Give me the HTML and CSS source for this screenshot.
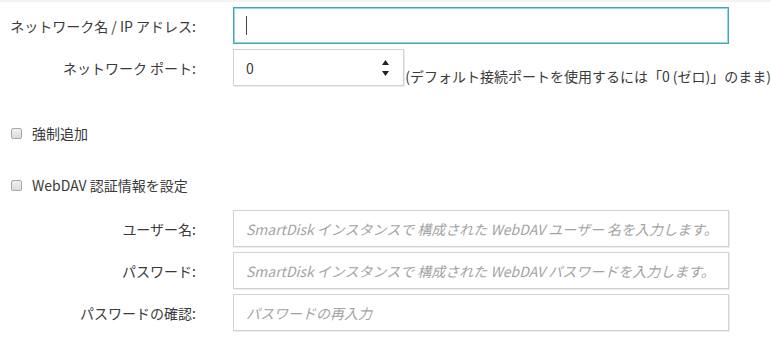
FILE: index.html
```html
<!DOCTYPE html>
<html lang="ja">
<head>
    <meta charset="UTF-8">
    <meta name="viewport" content="width=device-width, initial-scale=1.0">
    <title>ネットワーク設定</title>
    <link rel="stylesheet" href="styles.css">
</head>
<body>
    <div class="topbar"></div>
    <form class="form">
        <div class="row">
            <label class="label" for="hostInput">ネットワーク名 / IP アドレス:</label>
            <div class="field focused">
                <input type="text" id="hostInput" class="text-input">
                <span class="caret"></span>
            </div>
        </div>

        <div class="row">
            <label class="label" for="portInput">ネットワーク ポート:</label>
            <div class="number">
                <input type="text" id="portInput" class="number-input" value="0">
                <span class="spin">
                    <svg width="7" height="5" viewBox="0 0 7 5"><polygon points="3.5,0 7,5 0,5" fill="#222"/></svg>
                    <svg width="7" height="5" viewBox="0 0 7 5"><polygon points="0,0 7,0 3.5,5" fill="#222"/></svg>
                </span>
            </div>
            <span class="hint">(デフォルト接続ポートを使用するには「0 (ゼロ)」のまま)</span>
        </div>

        <label class="check first">
            <input type="checkbox" class="box">
            <span>強制追加</span>
        </label>

        <label class="check second">
            <input type="checkbox" class="box">
            <span>WebDAV 認証情報を設定</span>
        </label>

        <div class="row creds">
            <label class="label" for="userInput">ユーザー名:</label>
            <div class="field">
                <input type="text" id="userInput" class="text-input" placeholder="SmartDisk インスタンスで 構成された WebDAV ユーザー 名を入力します。">
            </div>
        </div>

        <div class="row">
            <label class="label" for="passInput">パスワード:</label>
            <div class="field">
                <input type="password" id="passInput" class="text-input" placeholder="SmartDisk インスタンスで 構成された WebDAV パスワードを入力します。">
            </div>
        </div>

        <div class="row">
            <label class="label" for="confirmInput">パスワードの確認:</label>
            <div class="field">
                <input type="password" id="confirmInput" class="text-input" placeholder="パスワードの再入力">
            </div>
        </div>
    </form>
</body>
</html>
```

FILE: styles.css
```css
body {
    margin: 0;
    font-family: "Noto Sans CJK JP", sans-serif;
    font-size: 14px;
    color: #3a3a3a;
    background: #fff;
}
.topbar {
    height: 2px;
    background-color: #f3f3f3;
}
.form {
    padding-top: 5px;
}
.row {
    display: flex;
    align-items: center;
    margin-bottom: 5px;
}
.label {
    flex: 0 0 196px;
    margin-right: 37px;
    text-align: right;
    line-height: 20px;
    white-space: nowrap;
}
.field {
    position: relative;
    width: 496px;
    height: 37px;
    border: 1px solid #d2d2d2;
    box-sizing: border-box;
    box-shadow: 1px 1px 0 #ececec;
}
.field.focused {
    border-color: #3caab3;
    box-shadow: inset 0 0 0 1px #9dd3d7;
}
.text-input, .number-input {
    width: 100%;
    height: 100%;
    border: none;
    outline: none;
    padding: 0 12px;
    box-sizing: border-box;
    font-family: inherit;
    font-size: 14px;
    color: #3a3a3a;
    background: transparent;
}
.text-input::placeholder {
    color: #a3a3a3;
    font-style: italic;
}
.caret {
    position: absolute;
    left: 12px;
    top: 8px;
    width: 1px;
    height: 19px;
    background-color: #444;
}
.number {
    display: flex;
    align-items: center;
    width: 172px;
    height: 37px;
    border: 1px solid #d2d2d2;
    box-sizing: border-box;
    box-shadow: 1px 1px 0 #ececec;
}
.number-input {
    flex: 1;
    min-width: 0;
}
.spin {
    display: flex;
    flex-direction: column;
    align-items: center;
    gap: 6px;
    width: 20px;
    margin-right: 8px;
}
.spin svg {
    display: block;
}
.hint {
    margin-left: 1px;
    margin-top: 17px;
    white-space: nowrap;
    line-height: 20px;
}
.check {
    display: flex;
    align-items: center;
    height: 20px;
    padding-left: 11px;
    line-height: 20px;
}
.check.first {
    margin-top: 37px;
}
.check.second {
    margin-top: 32px;
}
.box {
    appearance: none;
    -webkit-appearance: none;
    width: 11px;
    height: 11px;
    margin: 0 10px 0 0;
    border: 1px solid #a9a9a9;
    border-radius: 2px;
    box-sizing: border-box;
    background: linear-gradient(#f0f0f0, #dcdcdc);
}
.creds {
    margin-top: 15px;
}
```
